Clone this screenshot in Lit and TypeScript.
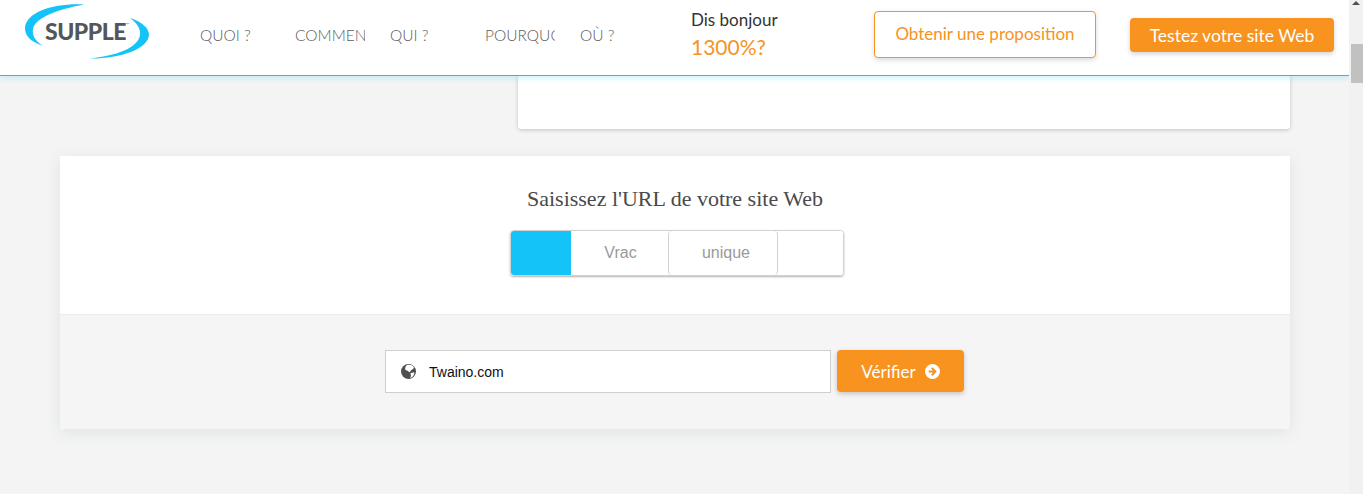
import { LitElement, html, css } from "lit";
import { customElement } from "lit/decorators.js";

@customElement("app-root")
export class AppRoot extends LitElement {
  static styles = css`
    :host { display: flex; width: 1363px; height: 494px; overflow: hidden; font-family: Lato, "Open Sans", sans-serif; background: #f4f4f4; }
    * { box-sizing: border-box; }
    .page { width: 1349px; height: 494px; position: relative; overflow: hidden; flex: none; }
    .header { position: relative; z-index: 2; height: 76px; background: #fff; border-bottom: 1px solid #14c3f7; box-shadow: 0 2px 6px rgba(20,195,247,.22); display: flex; align-items: flex-start; }
    .logo { margin: 2px 0 0 24px; width: 128px; height: 58px; flex: none; display: block; }
    .logo text { font: 900 23px Lato, sans-serif; fill: #54565a; letter-spacing: -0.5px; }
    .logo .tm { font: 400 4px Lato, sans-serif; }
    .nav { display: flex; gap: 25px; margin: 25px 0 0 48px; flex: none; }
    .nav span { width: 70px; overflow: hidden; white-space: nowrap; font-size: 15.5px; line-height: 20px; color: #5c5c5c; font-weight: 300; }
    .hello { margin: 10px 0 0 41px; width: 183px; flex: none; }
    .hello .a { font-size: 17px; line-height: 20px; color: #333; }
    .hello .b { font-size: 21px; line-height: 24px; margin-top: 5px; color: #f7931e; }
    .btn { display: flex; align-items: center; justify-content: center; border-radius: 4px; font-size: 17px; flex: none; }
    .outline { margin-top: 11px; width: 222px; height: 47px; padding-bottom: 2px; border: 1px solid #f7931e; color: #f7931e; background: #fff; box-shadow: 0 2px 5px rgba(0,0,0,.15); }
    .solid { margin: 18px 0 0 34px; width: 204px; height: 34px; background: #f7931e; color: #fff; font-size: 17.5px; box-shadow: 0 2px 5px rgba(0,0,0,.18); }
    .main { padding: 0 59px 0 60px; }
    .card1 { margin: -1px 0 0 458px; height: 54px; background: #fff; border-radius: 0 0 3px 3px; box-shadow: 0 1px 4px rgba(0,0,0,.2); }
    .card2 { margin-top: 27px; border-radius: 3px 3px 0 0; box-shadow: 0 3px 16px rgba(90,120,120,.13); }
    .top { height: 159px; background: #fff; border-bottom: 1px solid #ececec; display: flex; flex-direction: column; align-items: center; padding-top: 30px; }
    .title { font: 22px/26px "Liberation Serif", serif; color: #4a4a4a; }
    .tabs { display: flex; margin-top: 18px; margin-left: 4px; height: 46px; border-radius: 4px; box-shadow: 0 1px 2px rgba(0,0,0,.3); border: 1px solid #d2d2d2; }
    .tab { display: flex; align-items: center; justify-content: center; font: 16px "Liberation Sans", sans-serif; color: #9a9a9a; background: #fff; }
    .tab.t0 { width: 60px; background: #14c3f7; border-radius: 3px 0 0 3px; }
    .tab.t1 { width: 97px; padding-left: 2px; }
    .tab.t2 { width: 110px; padding-left: 6px; border-left: 1px solid #d2d2d2; border-right: 1px solid #d2d2d2; border-radius: 4px; }
    .tab.t3 { width: 65px; border-radius: 0 3px 3px 0; }
    .bottom { height: 114px; background: #f5f5f5; display: flex; padding: 35px 0 0 325px; gap: 6px; align-items: flex-start; }
    .input { width: 446px; height: 43px; border: 1px solid #cfcfcf; background: #fff; display: flex; align-items: center; padding-left: 15px; gap: 13px; font: 14px "Liberation Sans", sans-serif; color: #111; }
    .input svg { width: 15px; height: 15px; flex: none; }
    .go { width: 127px; height: 42px; background: #f7931e; color: #fff; gap: 9px; box-shadow: 0 2px 5px rgba(0,0,0,.2); font-size: 17px; }
    .go svg { width: 15px; height: 15px; }
    .scroll { width: 14px; height: 494px; background: #f1f1f1; flex: none; position: relative; display: flex; flex-direction: column; align-items: flex-end; }
    .arrow { width: 0; height: 0; border-left: 4px solid transparent; border-right: 4px solid transparent; border-bottom: 4px solid #505050; margin: 1px 3px 0 0; }
    .thumb { width: 12px; height: 39px; background: #c1c1c1; margin-top: 39px; }
  `;

  render() {
    return html`
      <div class="page">
        <div class="header">
          <svg class="logo" viewBox="0 0 128 58">
            <path d="M60 2.5 C30 1 2 10 1 26 C1 33 5 39 19 44 C11 39 8 33 9 27 C11 15 36 7 60 2.5Z" fill="#14c3f7"/>
            <path d="M106 16 C118 20 125 26 125 33 C124 47 96 57 65 56.5 C92 54 114 46 116 33 C117 27 113 21 106 16Z" fill="#14c3f7"/>
            <text x="21" y="38">SUPPLE</text>
            <text class="tm" x="102" y="24">™</text>
          </svg>
          <div class="nav">
            <span>QUOI ?</span><span>COMMENT ?</span><span>QUI ?</span><span>POURQUOI ?</span><span>OÙ ?</span>
          </div>
          <div class="hello">
            <div class="a">Dis bonjour</div>
            <div class="b">1300%?</div>
          </div>
          <div class="btn outline">Obtenir une proposition</div>
          <div class="btn solid">Testez votre site Web</div>
        </div>
        <div class="main">
          <div class="card1"></div>
          <div class="card2">
            <div class="top">
              <div class="title">Saisissez l'URL de votre site Web</div>
              <div class="tabs">
                <div class="tab t0"></div>
                <div class="tab t1">Vrac</div>
                <div class="tab t2">unique</div>
                <div class="tab t3"></div>
              </div>
            </div>
            <div class="bottom">
              <div class="input">
                <svg viewBox="0 0 24 24"><circle cx="12" cy="12" r="12" fill="#4f4f4f"/><path d="M9 2c4-1.500 9-.5 11.500 3 1 1.500-1 2-2 3.500s-3 1-3.500 3-2.500 1.500-3.500 0S8 10 7 9 7 4 9 2ZM15 15c2-1 5-2 6.500-1-.5 4-3 7-6 8.500-1-2 .5-3 .5-4.500s-1.500-2-1-3Z" fill="#fff"/></svg>
                <span>Twaino.com</span>
              </div>
              <div class="btn go">
                <span>Vérifier</span>
                <svg viewBox="0 0 24 24"><circle cx="12" cy="12" r="12" fill="#fff"/><path d="M12 5l7 7-7 7-2.300-2.300 3-3H6v-3.400h6.700l-3-3Z" fill="#f7931e"/></svg>
              </div>
            </div>
          </div>
        </div>
      </div>
      <div class="scroll"><div class="arrow"></div><div class="thumb"></div></div>
    `;
  }
}
